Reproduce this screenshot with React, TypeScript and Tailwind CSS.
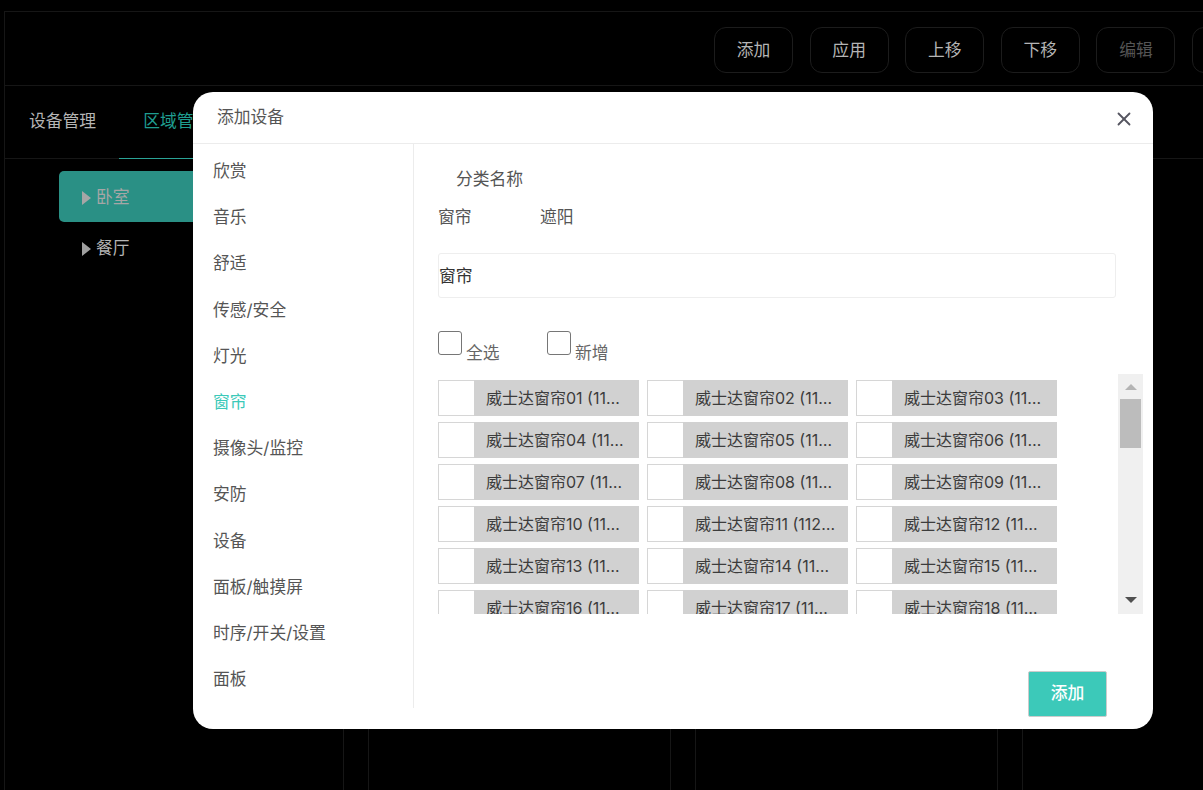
import { X } from 'lucide-react'

const FONT = "font-['Inter','Noto_Sans_CJK_SC',sans-serif]"

const toolButtons = [
  { label: '添加', color: 'text-[#b5b5b5]' },
  { label: '应用', color: 'text-[#b5b5b5]' },
  { label: '上移', color: 'text-[#b5b5b5]' },
  { label: '下移', color: 'text-[#b5b5b5]' },
  { label: '编辑', color: 'text-[#555555]' },
  { label: '', color: 'text-[#555555]' },
]

const categories = ['欣赏', '音乐', '舒适', '传感/安全', '灯光', '窗帘', '摄像头/监控', '安防', '设备', '面板/触摸屏', '时序/开关/设置', '面板']

const devices = Array.from({ length: 18 }, (_, i) => {
  const n = String(i + 1).padStart(2, '0')
  return `威士达窗帘${n} (112${n})`
})

function Triangle({ className }: { className: string }) {
  return (
    <svg viewBox="0 0 9 14" className={`h-[14px] w-[9px] shrink-0 ${className}`}>
      <path d="M0 0 L9 7 L0 14 Z" fill="currentColor" />
    </svg>
  )
}

function DeviceItem({ name }: { name: string }) {
  return (
    <div className="flex h-[36px] w-[201.25px] shrink-0">
      <div className="h-full w-[36px] shrink-0 border border-r-0 border-[#d6d6d6] bg-white" />
      <div className="flex min-w-0 flex-1 items-center bg-[#d1d1d1] pl-[12px] pr-[12px] text-[16px] text-[#3c3c3c]">
        <span className="truncate">{name}</span>
      </div>
    </div>
  )
}

function AddDeviceModal() {
  return (
    <div className="absolute left-[193px] top-[92px] flex h-[637px] w-[960px] flex-col rounded-[20px] bg-white">
      <div className="flex h-[52px] shrink-0 items-center justify-between border-b border-[#ececec] pl-[24px] pr-[18px]">
        <span className="text-[16.8px] text-[#555555]">添加设备</span>
        <X className="mt-[2px] h-[22px] w-[22px] text-[#555560]" strokeWidth={2} />
      </div>
      <div className="flex min-h-0 flex-1">
        <div className="mb-[21px] flex w-[221px] shrink-0 flex-col border-r border-[#ececec] pl-[20px] pt-[4px]">
          {categories.map(c => (
            <div
              key={c}
              className={`flex h-[46.2px] shrink-0 items-center pt-[1px] text-[16.8px] ${c === '窗帘' ? 'text-[#3cc9b9]' : 'text-[#555555]'}`}
            >
              {c}
            </div>
          ))}
        </div>
        <div className="flex min-w-0 flex-1 flex-col pl-[24px] pr-[10px]">
          <div className="ml-[18px] mt-[22px] h-[26px] text-[16.8px] leading-[26px] text-[#555555]">分类名称</div>
          <div className="mt-[12px] flex h-[26px] text-[16.8px] leading-[26px] text-[#555555]">
            <span className="w-[102px]">窗帘</span>
            <span>遮阳</span>
          </div>
          <div className="mt-[23px] flex h-[45px] w-[678px] shrink-0 items-center rounded-[3px] border border-[#eeeeee] pt-[2px] text-[16.8px] text-[#333333]">
            窗帘
          </div>
          <div className="mt-[33px] flex h-[43px] shrink-0 text-[16.8px] text-[#666666]">
            <div className="flex w-[109px]">
              <span className="h-[24px] w-[24px] rounded-[3px] border border-[#767676]" />
              <span className="ml-[4px] mt-[9px] leading-[26px]">全选</span>
            </div>
            <div className="flex">
              <span className="h-[24px] w-[24px] rounded-[3px] border border-[#767676]" />
              <span className="ml-[4px] mt-[9px] leading-[26px]">新增</span>
            </div>
          </div>
          <div className="flex h-[240px] w-[705px] shrink-0 justify-between">
            <div className="h-full w-[640px] overflow-hidden pt-[6px]">
              <div className="flex flex-wrap gap-x-[7.75px] gap-y-[6px]">
                {devices.map(d => (
                  <DeviceItem key={d} name={d} />
                ))}
              </div>
            </div>
            <div className="flex h-full w-[25px] shrink-0 flex-col items-center bg-[#f0f0f0]">
              <svg viewBox="0 0 12 6" className="mt-[10px] h-[6px] w-[12px] text-[#b4b4b4]">
                <path d="M6 0 L12 6 L0 6 Z" fill="currentColor" />
              </svg>
              <div className="mt-[9px] h-[49px] w-[21px] bg-[#bcbcbc]" />
              <svg viewBox="0 0 12 6" className="mb-[11px] mt-auto h-[6px] w-[12px] text-[#505050]">
                <path d="M0 0 L12 0 L6 6 Z" fill="currentColor" />
              </svg>
            </div>
          </div>
          <div className="mt-[57px] flex w-[669px] justify-end">
            <button className="h-[46px] w-[79px] rounded-[2px] border border-[#cccccc] bg-[#3cc9b9] text-[16.8px] font-medium text-white">
              添加
            </button>
          </div>
        </div>
      </div>
    </div>
  )
}

export default function App() {
  return (
    <div className={`${FONT} relative h-[790px] w-[1203px] overflow-hidden bg-black pl-[4px] pt-[11px]`}>
      <div className="flex h-full flex-col border-l border-[#161616]">
        <div className="flex h-[75px] shrink-0 items-center gap-[16.5px] overflow-hidden border-y border-[#161616] pl-[709px] pt-[3px]">
          {toolButtons.map((b, i) => (
            <button
              key={i}
              className={`h-[46px] w-[79.1px] shrink-0 rounded-[12px] border border-[#1c1c1c] pt-[1px] text-[16.8px] ${b.color}`}
            >
              {b.label}
            </button>
          ))}
        </div>
        <div className="flex h-[73px] shrink-0 border-b border-[#161616] pl-[24px] text-[16.8px]">
          <div className="flex items-center text-[#b5b5b5]">设备管理</div>
          <div className="relative ml-[23px] flex items-center px-[24px] text-[#1f9d90]">
            区域管理
            <div className="absolute -bottom-px left-0 right-0 h-px bg-[#2aa396]" />
          </div>
        </div>
        <div className="flex min-h-0 flex-1">
          <div className="w-[339px] shrink-0 border-r border-[#161616] pl-[54px] pt-[12px] text-[16.8px]">
            <div className="flex h-[51px] w-[240px] items-center gap-[5px] rounded-[5px] bg-[#2a9085] pl-[23px] pt-[2px] text-[#a6a6a6]">
              <Triangle className="text-[#a6a6a6]" />
              卧室
            </div>
            <div className="flex h-[51px] items-center gap-[5px] pl-[23px] pt-[2px] text-[#b5b5b5]">
              <Triangle className="text-[#a0a0a0]" />
              餐厅
            </div>
          </div>
          <div className="ml-[24px] h-full w-[303px] shrink-0 border-x border-[#161616]" />
          <div className="ml-[24px] h-full w-[303px] shrink-0 border-x border-[#161616]" />
          <div className="ml-[24px] h-full flex-1 border-l border-[#161616]" />
        </div>
      </div>
      <AddDeviceModal />
    </div>
  )
}
